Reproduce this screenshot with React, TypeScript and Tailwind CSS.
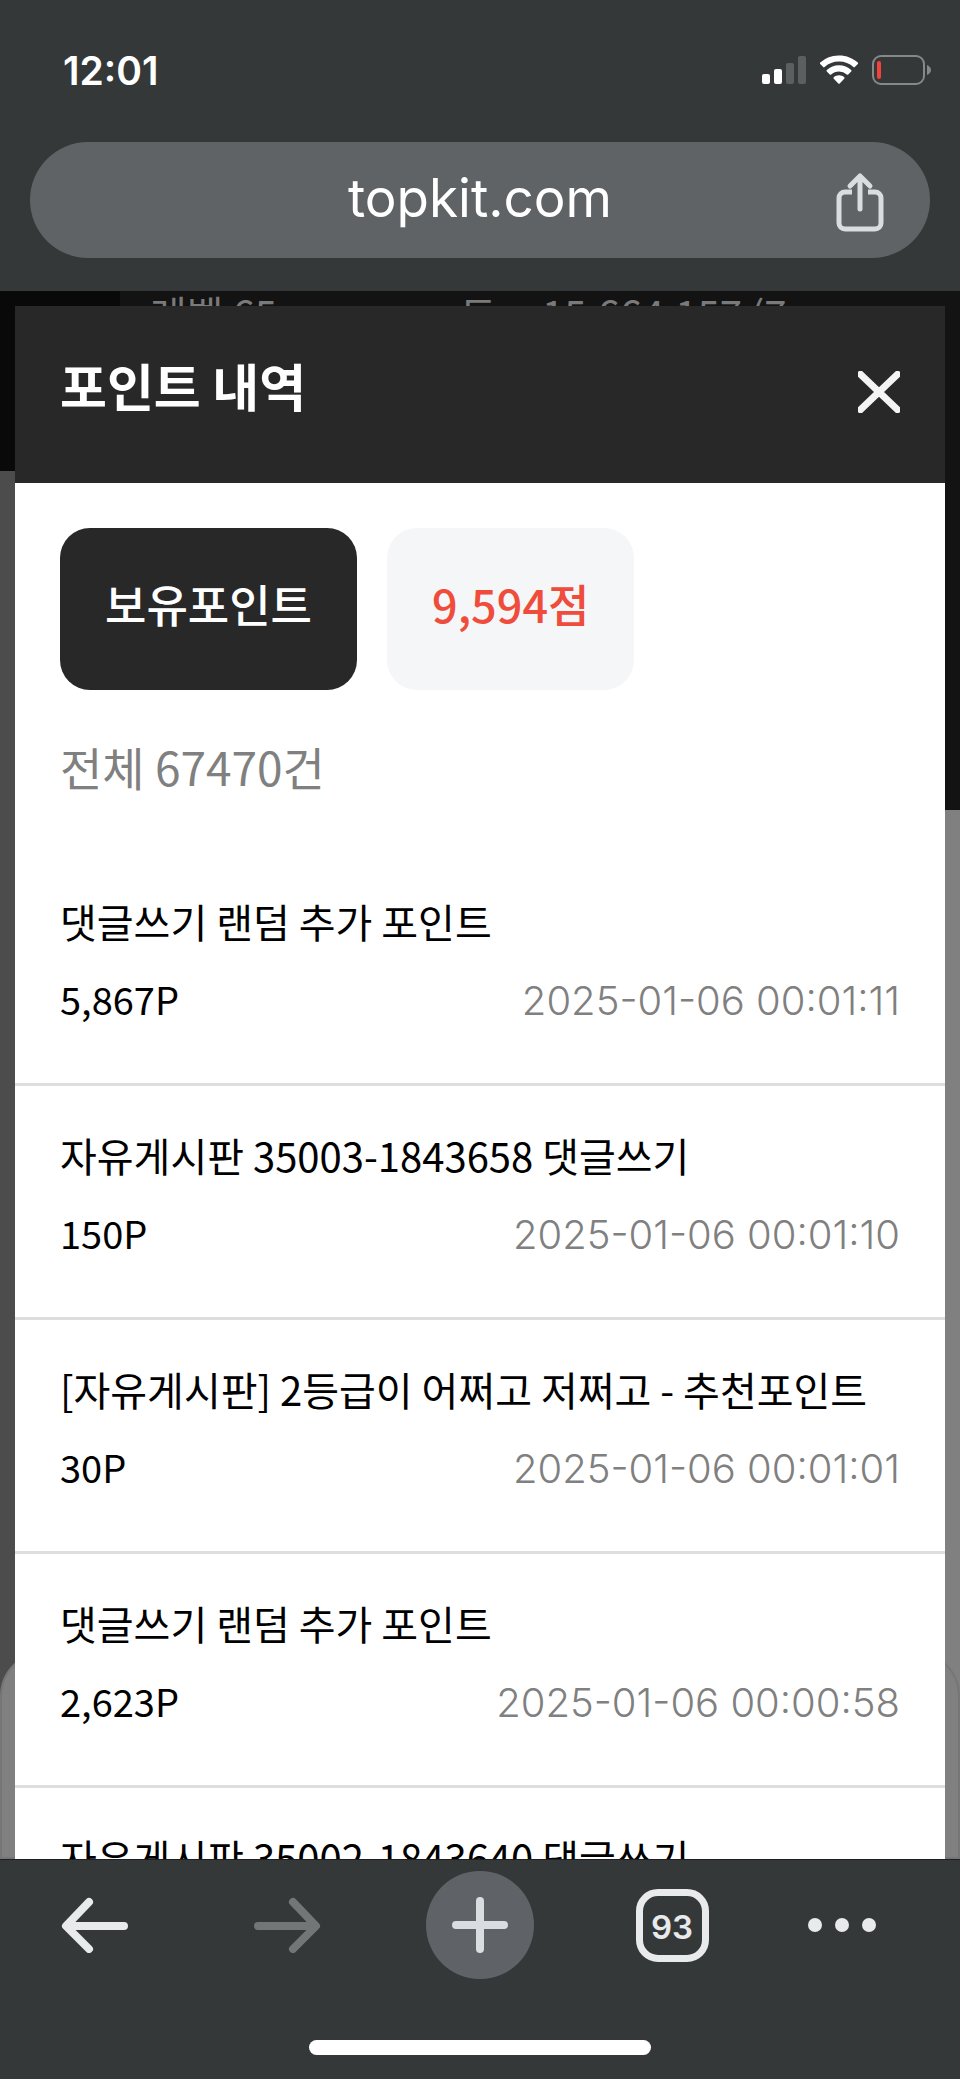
import React from 'react';

interface PointEntry {
  id: number;
  title: string;
  amount?: string;
  date?: string;
}

const entries: PointEntry[] = [
  { id: 1, title: '댓글쓰기 랜덤 추가 포인트', amount: '5,867P', date: '2025-01-06 00:01:11' },
  { id: 2, title: '자유게시판 35003-1843658 댓글쓰기', amount: '150P', date: '2025-01-06 00:01:10' },
  { id: 3, title: '[자유게시판] 2등급이 어쩌고 저쩌고 - 추천포인트', amount: '30P', date: '2025-01-06 00:01:01' },
  { id: 4, title: '댓글쓰기 랜덤 추가 포인트', amount: '2,623P', date: '2025-01-06 00:00:58' },
  { id: 5, title: '자유게시판 35002-1843640 댓글쓰기' },
];

const StatusIcons: React.FC = () => (
  <div className="flex items-center gap-3">
    <svg width="46" height="30" viewBox="0 0 46 30" aria-hidden="true">
      <rect x="0" y="19" width="8" height="10" rx="2" fill="#fff" />
      <rect x="12" y="14" width="8" height="15" rx="2" fill="#fff" />
      <rect x="24" y="8" width="8" height="21" rx="2" fill="#5c5f60" />
      <rect x="36" y="1" width="8" height="28" rx="2" fill="#5c5f60" />
    </svg>
    <svg width="40" height="30" viewBox="0 0 40 30" fill="#fff" aria-hidden="true">
      <path d="M19 0.500C26.500 0.500 33 3.200 37.800 7.600a1 1 0 0 1 0 1.400l-3 3.100a1 1 0 0 1-1.400 0A21 21 0 0 0 19 6.600 21 21 0 0 0 4.600 12.100a1 1 0 0 1-1.400 0L.2 9a1 1 0 0 1 0-1.400A27.200 27.200 0 0 1 19 .5z" />
      <path d="M19 10.300c4.700 0 9 1.800 12.200 4.800a1 1 0 0 1 0 1.400l-3 3a1 1 0 0 1-1.400 0A11.500 11.500 0 0 0 19 16.400c-3 0-5.700 1.200-7.800 3.100a1 1 0 0 1-1.400 0l-3-3a1 1 0 0 1 0-1.400A17.800 17.800 0 0 1 19 10.300z" />
      <path d="M19 20.300c2 0 3.800.7 5.200 1.900a1 1 0 0 1 0 1.500l-4.500 4.700a1 1 0 0 1-1.400 0l-4.500-4.700a1 1 0 0 1 0-1.500c1.400-1.200 3.200-1.900 5.200-1.900z" />
    </svg>
    <svg width="60" height="30" viewBox="0 0 60 30" aria-hidden="true">
      <rect x="1" y="1" width="51" height="28" rx="8" fill="none" stroke="#868889" strokeWidth="2" />
      <rect x="5" y="6" width="4" height="18" rx="2" fill="#f6413a" />
      <path d="M55 10c2 1 4 2.500 4 5s-2 4-4 5z" fill="#868889" />
    </svg>
  </div>
);

const BrowserHeader: React.FC = () => (
  <header className="shrink-0 bg-[#353839] pb-[33px]">
    <div className="flex h-[142px] items-center justify-between pr-7 pb-[2px] pl-[63px]">
      <span className="text-[39px] font-semibold leading-none text-white">12:01</span>
      <StatusIcons />
    </div>
    <div className="mx-[30px] grid h-[116px] grid-cols-[1fr_auto_1fr] items-center rounded-full bg-[#5f6365] px-[45px]">
      <span className="col-start-2 pb-1 text-[53px] leading-none text-white">topkit.com</span>
      <button type="button" aria-label="공유" className="justify-self-end">
        <svg width="50" height="64" viewBox="0 -4 50 64" fill="none" stroke="#dadde0" strokeWidth="5" strokeLinecap="round" strokeLinejoin="round" aria-hidden="true">
          <path d="M17 20H10a6 6 0 0 0-6 6v25a6 6 0 0 0 6 6h30a6 6 0 0 0 6-6V26a6 6 0 0 0-6-6h-7" strokeLinecap="butt" />
          <path d="M25 37V4M15 14l10-10 10 10" />
        </svg>
      </button>
    </div>
  </header>
);

// Dimmed profile page that shows around the dialog
const Backdrop: React.FC = () => (
  <div className="absolute inset-0 flex flex-col overflow-hidden bg-[#4c4c4c]" aria-hidden="true">
    <div className="flex h-[180px] shrink-0">
      <div className="w-[120px] bg-[#090909]" />
      <div className="flex flex-1 bg-[#131313] pl-[30px] text-[40px] leading-[45px] text-[#7a7a7a]">
        <span className="w-[310px]">레벨 65</span>
        <span className="w-[82px]">토</span>
        <span>15,664,157 (7</span>
      </div>
    </div>
    <div className="flex flex-1 flex-col">
      <div className="ml-auto h-[339px] w-[120px] shrink-0 bg-[#131313]" />
      <div className="ml-auto w-[120px] flex-1 bg-[#808080]" />
    </div>
    <div className="absolute inset-x-0 bottom-0 h-[208px] rounded-t-[45px] border-2 border-[#767676] bg-[#808080]" />
  </div>
);

const PointDialog: React.FC = () => (
  <section role="dialog" aria-labelledby="point-title" className="relative mx-[15px] mt-[15px] bg-white">
    <div className="flex h-[177px] items-start justify-between bg-[#282828] px-[45px] pt-[45px]">
      <h1 id="point-title" className="text-[51px] font-bold leading-[69px] text-white">포인트 내역</h1>
      <button type="button" aria-label="닫기" className="mt-5">
        <svg width="42" height="42" viewBox="0 0 42 42" stroke="#f4f4f4" strokeWidth="7" aria-hidden="true">
          <path d="M0 1l42 40M42 1L0 41" />
        </svg>
      </button>
    </div>
    <div className="flex gap-[30px] px-[45px] pt-[45px] text-[45px] font-medium leading-[72px]">
      <span className="rounded-[30px] bg-[#282828] px-[45px] pt-10 pb-[50px] text-white">보유포인트</span>
      <span className="rounded-[30px] bg-[#f4f6f8] px-[45px] pt-10 pb-[50px] text-[#f04c3c]">9,594점</span>
    </div>
    <p className="px-[45px] pt-10 text-[46px] leading-[72px] text-[#808080]">전체 67470건</p>
    <ul className="pt-[50px]">
      {entries.map((entry) => (
        <li key={entry.id} className="border-b-[3px] border-[#dedede] px-[45px] pt-[30px] pb-[43px] text-[40px] leading-[78px] text-black">
          <p>{entry.title}</p>
          {entry.amount && (
            <div className="flex items-baseline justify-between">
              <span className="text-[38px]">{entry.amount}</span>
              <time className="font-['Inter','Noto_Sans_CJK_KR',sans-serif] font-light text-[#808080]">{entry.date}</time>
            </div>
          )}
        </li>
      ))}
    </ul>
  </section>
);

const BrowserToolbar: React.FC = () => (
  <nav className="shrink-0 border-t border-[#1c1e1f] bg-[#353839] pt-[11px] pb-6 text-[#e8eaec]">
    <div className="grid h-[108px] grid-cols-5 items-center justify-items-center">
      <button type="button" aria-label="뒤로">
        <svg width="70" height="56" viewBox="0 0 70 56" fill="none" stroke="currentColor" strokeWidth="8" strokeLinecap="round" strokeLinejoin="round" aria-hidden="true">
          <path d="M63 29H7M28 5L5 29l23 23" />
        </svg>
      </button>
      <button type="button" aria-label="앞으로" className="text-[#727677]">
        <svg width="70" height="56" viewBox="0 0 70 56" fill="none" stroke="currentColor" strokeWidth="8" strokeLinecap="round" strokeLinejoin="round" aria-hidden="true">
          <path d="M5 29h56M40 5l23 24-23 23" />
        </svg>
      </button>
      <button type="button" aria-label="새 탭" className="flex size-[108px] items-center justify-center rounded-full bg-[#5f6367] text-[#dadde0]">
        <svg width="56" height="56" viewBox="0 0 56 56" stroke="currentColor" strokeWidth="8" strokeLinecap="round" aria-hidden="true">
          <path d="M28 4v48M4 28h48" />
        </svg>
      </button>
      <button type="button" aria-label="탭" className="flex size-[73px] items-center justify-center rounded-[22px] border-[7px] border-current pt-1 text-[33px] font-semibold leading-none">
        93
      </button>
      <button type="button" aria-label="메뉴" className="pr-11">
        <svg width="70" height="16" viewBox="0 0 70 16" fill="currentColor" aria-hidden="true">
          <circle cx="8" cy="8" r="7" />
          <circle cx="35" cy="8" r="7" />
          <circle cx="62" cy="8" r="7" />
        </svg>
      </button>
    </div>
    <div className="mx-auto mt-[61px] h-[15px] w-[342px] rounded-full bg-white" />
  </nav>
);

const App: React.FC = () => {
  return (
    <div className="flex h-screen flex-col font-['Inter',sans-serif]">
      <BrowserHeader />
      <main className="relative min-h-0 flex-1 overflow-hidden font-['Noto_Sans_CJK_KR',sans-serif]">
        <Backdrop />
        <PointDialog />
      </main>
      <BrowserToolbar />
    </div>
  );
};

export default App;
